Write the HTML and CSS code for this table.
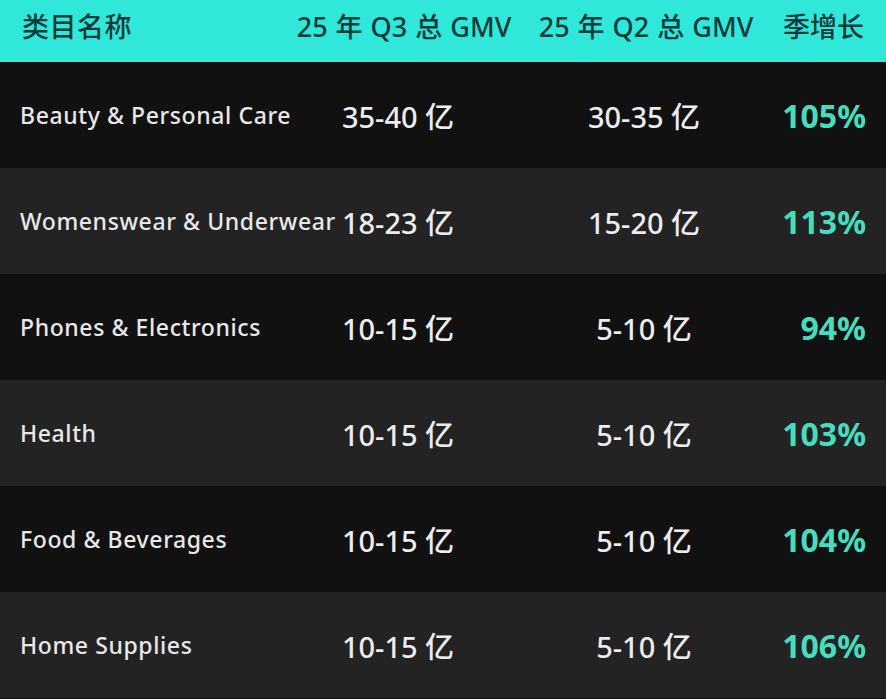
FILE: index.html
```html
<!DOCTYPE html>
<html lang="zh">
<head>
<meta charset="utf-8">
<link rel="stylesheet" href="styles.css">
</head>
<body>
<div class="table">
  <div class="row head">
    <div class="c1">类目名称</div>
    <div class="c2">25 年 Q3 总 GMV</div>
    <div class="c3">25 年 Q2 总 GMV</div>
    <div class="c4">季增长</div>
  </div>
  <div class="row odd">
    <div class="c1 name">Beauty &amp; Personal Care</div>
    <div class="c2 val">35-40 亿</div>
    <div class="c3 val">30-35 亿</div>
    <div class="c4 pct">105%</div>
  </div>
  <div class="row even">
    <div class="c1 name">Womenswear &amp; Underwear</div>
    <div class="c2 val">18-23 亿</div>
    <div class="c3 val">15-20 亿</div>
    <div class="c4 pct">113%</div>
  </div>
  <div class="row odd">
    <div class="c1 name">Phones &amp; Electronics</div>
    <div class="c2 val">10-15 亿</div>
    <div class="c3 val">5-10 亿</div>
    <div class="c4 pct">94%</div>
  </div>
  <div class="row even">
    <div class="c1 name">Health</div>
    <div class="c2 val">10-15 亿</div>
    <div class="c3 val">5-10 亿</div>
    <div class="c4 pct">103%</div>
  </div>
  <div class="row odd">
    <div class="c1 name">Food &amp; Beverages</div>
    <div class="c2 val">10-15 亿</div>
    <div class="c3 val">5-10 亿</div>
    <div class="c4 pct">104%</div>
  </div>
  <div class="row even">
    <div class="c1 name">Home Supplies</div>
    <div class="c2 val">10-15 亿</div>
    <div class="c3 val">5-10 亿</div>
    <div class="c4 pct">106%</div>
  </div>
</div>
</body>
</html>
```

FILE: styles.css
```css
html, body {
  margin: 0;
  padding: 0;
  background: #0e0d0e;
}
body {
  width: 886px;
  height: 699px;
  overflow: hidden;
  font-family: "Noto Sans", "Noto Sans CJK SC", sans-serif;
}
.table {
  display: flex;
  flex-direction: column;
}
.row {
  display: grid;
  grid-template-columns: 318px 160px 266px minmax(0, 1fr);
  align-items: center;
  padding: 0 20px 0 0;
  height: 106px;
  white-space: nowrap;
}
.row .c1 { padding-left: 20px; }
.head {
  height: 62px;
  padding-bottom: 12px;
  box-sizing: border-box;
  grid-template-columns: 270px 216px 216px minmax(0, 1fr);
  column-gap: 26px;
  background: #2fe8da;
  color: #103a3a;
  font-size: 27px;
  font-weight: 500;
}
.head .c1 { padding-left: 22px; letter-spacing: 0.5px; }
.head .c2, .head .c3 { word-spacing: 1px; }
.head .c3 { padding-left: 0; }
.head .c4 { margin-right: 2px; }
.odd { background: #121112; }
.even { background: #232323; }
.c2, .c3 { text-align: center; }
.c3 { padding-left: 66px; box-sizing: border-box; }
.c4 { text-align: right; }
.name {
  color: #e8e8e8;
  font-size: 23px;
  font-weight: 500;
  letter-spacing: 0.6px;
}
.val {
  color: #ececec;
  font-size: 29px;
  font-weight: 500;
}
.pct {
  color: #48dcbf;
  font-size: 32px;
  font-weight: 700;
}
```
